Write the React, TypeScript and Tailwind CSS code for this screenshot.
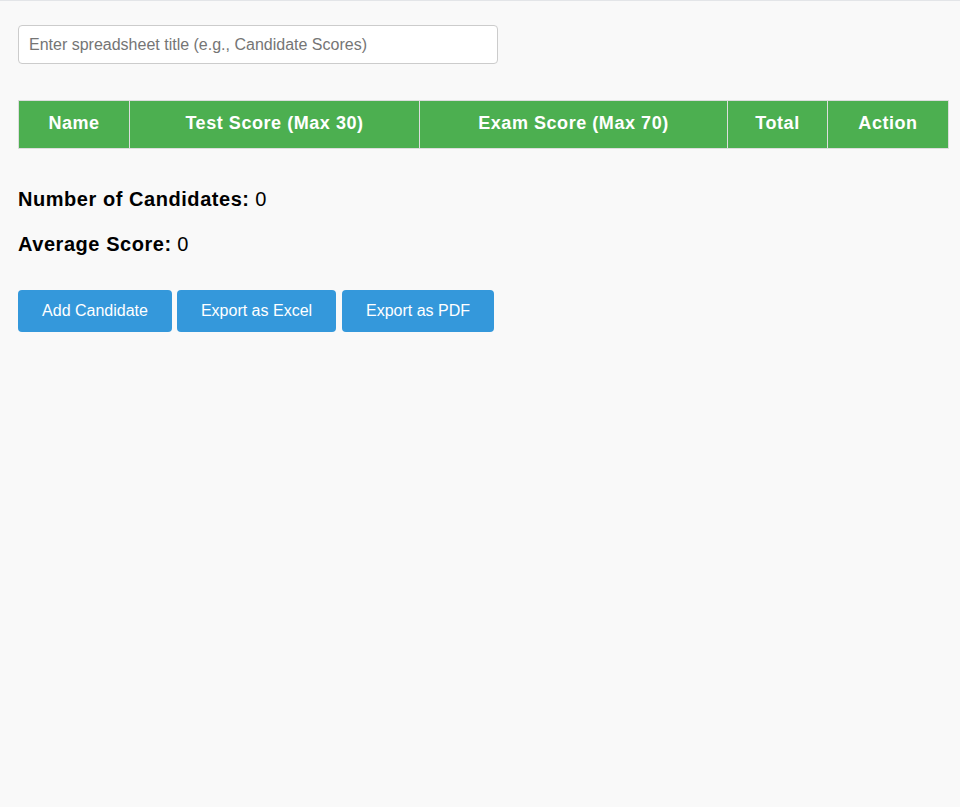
export default function App() {
  const cols = [
    { label: "Name", w: "w-[111px]" },
    { label: "Test Score (Max 30)", w: "w-[290px]" },
    { label: "Exam Score (Max 70)", w: "w-[308px]" },
    { label: "Total", w: "w-[100px]" },
    { label: "Action", w: "w-[121px]" },
  ];

  return (
    <div className="min-h-[807px] bg-[#f9f9f9] border-t border-[#e3e5e8] pl-[18px] pt-[24px] font-['Liberation_Sans',Arial,sans-serif] text-black">
      <input
        type="text"
        placeholder="Enter spreadsheet title (e.g., Candidate Scores)"
        className="block w-[480px] h-[39px] px-[10px] text-[16px] bg-white border border-[#cccccc] rounded-[4px] placeholder:text-[#757575] outline-none"
      />

      <table className="mt-[36px] w-[930px] border-collapse table-fixed">
        <thead>
          <tr>
            {cols.map((c) => (
              <th
                key={c.label}
                className={`${c.w} h-[48px] bg-[#4caf50] text-white text-[18px] font-bold tracking-[0.55px] text-center border border-[#dddddd] p-0 pb-[2px]`}
              >
                {c.label}
              </th>
            ))}
          </tr>
        </thead>
        <tbody></tbody>
      </table>

      <p className="mt-[38px] text-[20px] leading-[24px]">
        <span className="font-bold tracking-[0.55px]">Number of Candidates:</span> 0
      </p>
      <p className="mt-[21px] text-[20px] leading-[24px]">
        <span className="font-bold tracking-[0.55px]">Average Score:</span> 0
      </p>

      <div className="mt-[34px] flex gap-[5px]">
        <button className="h-[42px] w-[154px] bg-[#3498db] text-white text-[16px] rounded-[4px]">Add Candidate</button>
        <button className="h-[42px] w-[159px] bg-[#3498db] text-white text-[16px] rounded-[4px]">Export as Excel</button>
        <button className="ml-[1px] h-[42px] w-[152px] bg-[#3498db] text-white text-[16px] rounded-[4px]">Export as PDF</button>
      </div>
    </div>
  );
}
